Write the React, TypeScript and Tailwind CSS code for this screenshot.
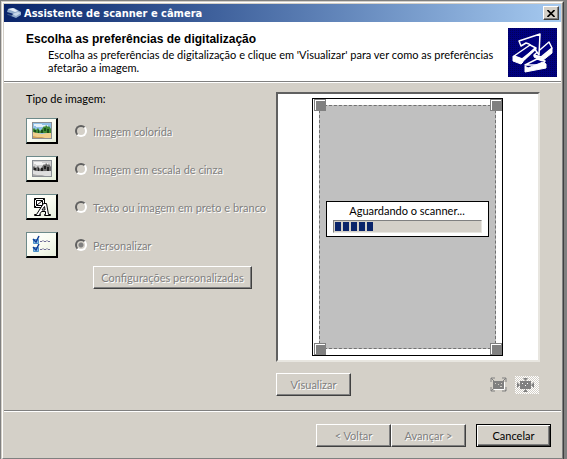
import type { ReactNode } from "react";

const raised =
  "border border-t-white border-l-white border-r-[#404040] border-b-[#404040] shadow-[inset_-1px_-1px_0_#808080]";
const disabledText = "text-[#808080] [text-shadow:1px_1px_0_#fff]";

function PushButton({ children, className = "", disabled = true }: { children: ReactNode; className?: string; disabled?: boolean }) {
  return (
    <button
      type="button"
      disabled={disabled}
      className={`h-[23px] bg-[#d4d0c8] leading-[13px] whitespace-nowrap ${raised} ${disabled ? disabledText : "text-black"} ${className}`}
    >
      {children}
    </button>
  );
}

function Landscape({ gray }: { gray?: boolean }) {
  const c = gray
    ? { sky: "#d0d0d0", cloud: "#f4f4f4", tree: "#686868", dark: "#222222", sand: "#dedede", shade: "#aaaaaa" }
    : { sky: "#8fc0e8", cloud: "#e4f1fa", tree: "#3f8a35", dark: "#174d1c", sand: "#f0cf8c", shade: "#cf9f58" };
  return (
    <svg width="20" height="17" viewBox="0 0 20 17" aria-hidden="true">
      <rect x="0.5" y="0.5" width="19" height="16" fill={c.sky} stroke="#8a8f94" />
      <path d="M2 2h8v1h6v2H4V4H2z" fill={c.cloud} />
      <path d="M1 7l1-1 2 2 2-2 2 3 2-2 2-3 1 1 1-2 2 2 1-1 2 3v4H1z" fill={c.tree} />
      <path d="M2 8h2v3H2zM6 8h1v3H6zM9 8h2v3H9zM12 6h2v3h-2zM15 7h2v4h-2z" fill={c.dark} />
      <path d="M1 10l4 1 5 1 5-1 4 0v5H1z" fill={c.sand} />
      <path d="M1 14l4 1h8l-3 1H1z" fill={c.shade} />
    </svg>
  );
}

function TextGlyph() {
  return (
    <svg width="18" height="20" viewBox="0 0 18 20" fill="none" stroke="#000" aria-hidden="true">
      <path d="M1.500 1.500h10v9h-10z" fill="#fff" />
      <path d="M3.500 3.500h6v5h-6zM1.500 1.500l2 2M11.500 1.500l-2 2M1.500 10.500l2-2M4 8l5-4" />
      <path d="M10.500 6.500h3l2 11h2v1h-6v-1h1v-3h-4l-2 3h1v1h-6v-1h2z" fill="#fff" />
      <path d="M11.500 9.500l-2.500 3.500h3z" />
    </svg>
  );
}

function Checklist() {
  return (
    <svg width="20" height="19" viewBox="0 0 20 19" fill="none" aria-hidden="true">
      <path d="M1.500 4.500h5v4h-5zM1.500 12.500h5v4h-5z" fill="#8fc1e8" stroke="#4c93c9" />
      <path d="M1 4l3 3 3-6M1 12l3 3 3-6" stroke="#123c96" strokeWidth="1.500" />
      <path d="M8 6.500h2l1-1 1 1h2l1-1 1 1h2M8 14.500h2l1-1 1 1h2l1-1 1 1h2" stroke="#6f6c96" />
    </svg>
  );
}

function WizardLogo() {
  return (
    <svg width="49" height="49" viewBox="0 0 49 49" className="shrink-0" aria-hidden="true">
      <defs>
        <pattern id="dots" width="2" height="2" patternUnits="userSpaceOnUse">
          <rect width="2" height="2" fill="#000080" />
          <rect width="1" height="1" fill="#00005a" />
        </pattern>
      </defs>
      <rect width="49" height="49" fill="url(#dots)" />
      <g strokeLinejoin="round" stroke="#fff" fill="#000080">
        <path d="M17 37l12-6 8 2-3 4z" strokeWidth="1.500" />
        <path d="M17 38l3 2 15-6 3 2v4L17 44z" fill="#fff" strokeWidth="1" />
        <path d="M26 27l15-13 3 6-11 9z" strokeWidth="1.500" />
        <path d="M26 27l7 3 11-10v5l-10 8-8-4z" fill="#fff" strokeWidth="1" />
        <path d="M11 13l21-7-1 21-5-7-5-4-3-1-5 3z" strokeWidth="1.500" />
        <path d="M6 28l16-11 6 3-14 11z" strokeWidth="1.500" />
        <path d="M5 28l9 3 1 3-2 2-8-3z" fill="#fff" strokeWidth="1" />
        <path d="M14 33l14-13" strokeWidth="2.500" />
      </g>
    </svg>
  );
}

const imageTypes = [
  { id: "color", label: "Imagem colorida", icon: <Landscape /> },
  { id: "gray", label: "Imagem em escala de cinza", icon: <Landscape gray /> },
  { id: "text", label: "Texto ou imagem em preto e branco", icon: <TextGlyph /> },
  { id: "custom", label: "Personalizar", icon: <Checklist /> },
];

function TypeRow({ id, label, icon }: { id: string; label: string; icon: ReactNode }) {
  return (
    <div className="flex h-[26px] items-center whitespace-nowrap">
      <span className="flex h-[26px] w-8 items-center justify-center border border-t-[#6d8a8a] border-l-[#6d8a8a] border-r-2 border-b-2 border-r-black border-b-black bg-linear-to-br from-white via-[#fafcf2] to-[#e6eedb]">
        {icon}
      </span>
      <input
        type="radio"
        id={id}
        name="tipo"
        disabled
        defaultChecked={id === "custom"}
        className="ml-[17px] size-3 appearance-none rounded-full border-2 border-t-[#606060] border-l-[#606060] border-r-white border-b-white bg-[#d4d0c8] checked:bg-[radial-gradient(circle,#808080_2px,#d4d0c8_3px)]"
      />
      <label htmlFor={id} className={`ml-1.5 ${disabledText}`}>
        {label}
      </label>
    </div>
  );
}

function Preview() {
  const handle = "absolute size-3 border border-[#808080] bg-[#808080] shadow-[inset_1px_1px_0_#fff]";
  return (
    <div className="flex h-[270px] justify-center border-2 border-t-[#606060] border-l-[#606060] border-r-[#e8e6e0] border-b-[#e8e6e0] bg-white pt-1 pr-0.5">
      <div className="relative h-[258px] w-[191px] border border-black p-1.5">
        <div className="flex h-full items-center justify-center border border-dashed border-[#707070] bg-[#c0c0c0]">
          <div className="mb-4 flex h-9 w-[163px] flex-col border border-black bg-white px-1.5 pt-0.5">
            <p className="text-center">Aguardando o scanner...</p>
            <div
              role="progressbar"
              aria-label="Aguardando o scanner"
              className="mt-[3px] flex h-[13px] gap-0.5 border border-t-[#808080] border-l-[#808080] border-r-[#e8e6e0] border-b-[#e8e6e0] bg-[#d4d0c8] p-px"
            >
              {[0, 1, 2, 3, 4].map((n) => (
                <span key={n} className="w-1.5 bg-[#0a246a]" />
              ))}
            </div>
          </div>
        </div>
        <span className={`${handle} top-0 left-px`} />
        <span className={`${handle} top-0 right-0`} />
        <span className={`${handle} bottom-0 left-px`} />
        <span className={`${handle} right-0 bottom-0`} />
      </div>
    </div>
  );
}

function FitIcon() {
  return (
    <svg width="17" height="15" viewBox="0 0 17 15" aria-hidden="true">
      <path d="M1 5V1h4M12 1h4v4M16 10v4h-4M5 14H1v-4M1 1l3 3M16 1l-3 3M16 14l-3-3M1 14l3-3" fill="none" stroke="#808080" />
      <rect x="3" y="4" width="11" height="8" fill="#808080" />
      <path d="M5 6h1v1H5zM8 7h1v1H8zM11 6h1v1h-1zM10 9h2v1h-2z" fill="#d4d0c8" />
      <path d="M4 12.500h10.500V5" fill="none" stroke="#fff" />
    </svg>
  );
}

function ZoomIcon() {
  return (
    <svg width="24" height="18" viewBox="0 0 24 18" aria-hidden="true">
      <defs>
        <pattern id="check" width="2" height="2" patternUnits="userSpaceOnUse">
          <rect width="2" height="2" fill="#d4d0c8" />
          <rect width="1" height="1" fill="#fff" />
          <rect x="1" y="1" width="1" height="1" fill="#fff" />
        </pattern>
      </defs>
      <rect width="24" height="18" fill="url(#check)" />
      <path d="M5 5h11v8H5zM8 2h5l-2.500 3zM8 16h5l-2.500-3zM2 6v6l3-3zM19 6v6l-3-3z" fill="#808080" />
      <path d="M7 7h1v1H7zM10 9h1v1h-1zM12 7h1v1h-1z" fill="#fff" />
    </svg>
  );
}

export default function App() {
  return (
    <div className="bg-[#808080] pt-px pr-[3px] pl-px font-[Lato,'Liberation_Sans',Arial,sans-serif] text-[11px] leading-[13px] text-black">
      <div className="border border-t-[#d4d0c8] border-l-[#d4d0c8] border-r-[#404040] border-b-[#606060]">
        <div className="border border-t-white border-l-white border-r-[#808080] border-b-[#808080] bg-[#d4d0c8] p-px">
          <header className="flex h-[18px] items-center bg-linear-to-r from-[#0a246a] to-[#a6caf0] pr-0.5 pl-0.5">
            <svg width="16" height="14" viewBox="0 0 16 14" aria-hidden="true">
              <path d="M2 3l6-1 7 4v3l-5 3-5-2 3-2-7-2z" fill="#8fa9c9" />
              <path d="M2 3l5-1 5 3-3 1z" fill="#e6eef7" />
              <path d="M6 8l6-2 3 1-5 3z" fill="#c7d7e9" />
              <path d="M1 8l5 1v1l-4-1z" fill="#54708e" />
            </svg>
            <h1 className="ml-0.5 flex-1 font-['DejaVu_Sans_Condensed','DejaVu_Sans',sans-serif] text-[11px] font-bold whitespace-nowrap text-white">
              Assistente de scanner e câmera
            </h1>
            <button type="button" aria-label="Fechar" className={`flex h-3.5 w-4 items-center justify-center bg-[#d4d0c8] ${raised}`}>
              <svg width="8" height="7" viewBox="0 0 8 7" aria-hidden="true">
                <path d="M0.500 0l7 7M7.500 0l-7 7" stroke="#000" strokeWidth="1.600" />
              </svg>
            </button>
          </header>

          <section className="flex h-[59px] justify-between bg-white pt-1.5 pr-1 pl-[22px]">
            <div className="pt-1">
              <h2 className="font-['Liberation_Sans',Arial,sans-serif] text-[12px] leading-[14px] font-bold">
                Escolha as preferências de digitalização
              </h2>
              <p className="max-w-[480px] pt-0.5 pl-[22px]">
                Escolha as preferências de digitalização e clique em 'Visualizar' para ver como as preferências afetarão a imagem.
              </p>
            </div>
            <WizardLogo />
          </section>

          <main className="flex justify-between border-t border-[#808080] pr-[21px] pb-3.5 pl-[22px] shadow-[inset_0_1px_0_#fff]">
            <div role="radiogroup" aria-labelledby="tipo-titulo" className="min-w-0 pt-2.5">
              <h3 id="tipo-titulo">Tipo de imagem:</h3>
              <div className="flex flex-col gap-3 pt-[13px]">
                {imageTypes.map((t) => (
                  <TypeRow key={t.id} {...t} />
                ))}
              </div>
              <PushButton className="mt-2 ml-[67px] w-[159px]">Configurações personalizadas</PushButton>
            </div>
            <div className="w-[264px] shrink-0 pt-2.5">
              <Preview />
              <div className="mt-[11px] flex h-[23px] items-center gap-2 pr-px">
                <PushButton className="mr-auto w-[75px]">Visualizar</PushButton>
                <button type="button" disabled aria-label="Ajustar à página">
                  <FitIcon />
                </button>
                <button type="button" disabled aria-label="Ampliar seleção">
                  <ZoomIcon />
                </button>
              </div>
            </div>
          </main>

          <footer className="flex justify-end border-t border-[#808080] pt-[13px] pr-2.5 pb-2.5 shadow-[inset_0_1px_0_#fff]">
            <PushButton className="w-[75px]">&lt; Voltar</PushButton>
            <PushButton className="w-[75px]">Avançar &gt;</PushButton>
            <button
              type="button"
              className="ml-2.5 h-[23px] w-[75px] border border-black bg-[#d4d0c8] shadow-[inset_1px_1px_0_#fff,inset_-1px_-1px_0_#404040,inset_-2px_-2px_0_#808080]"
            >
              Cancelar
            </button>
          </footer>
        </div>
      </div>
    </div>
  );
}
